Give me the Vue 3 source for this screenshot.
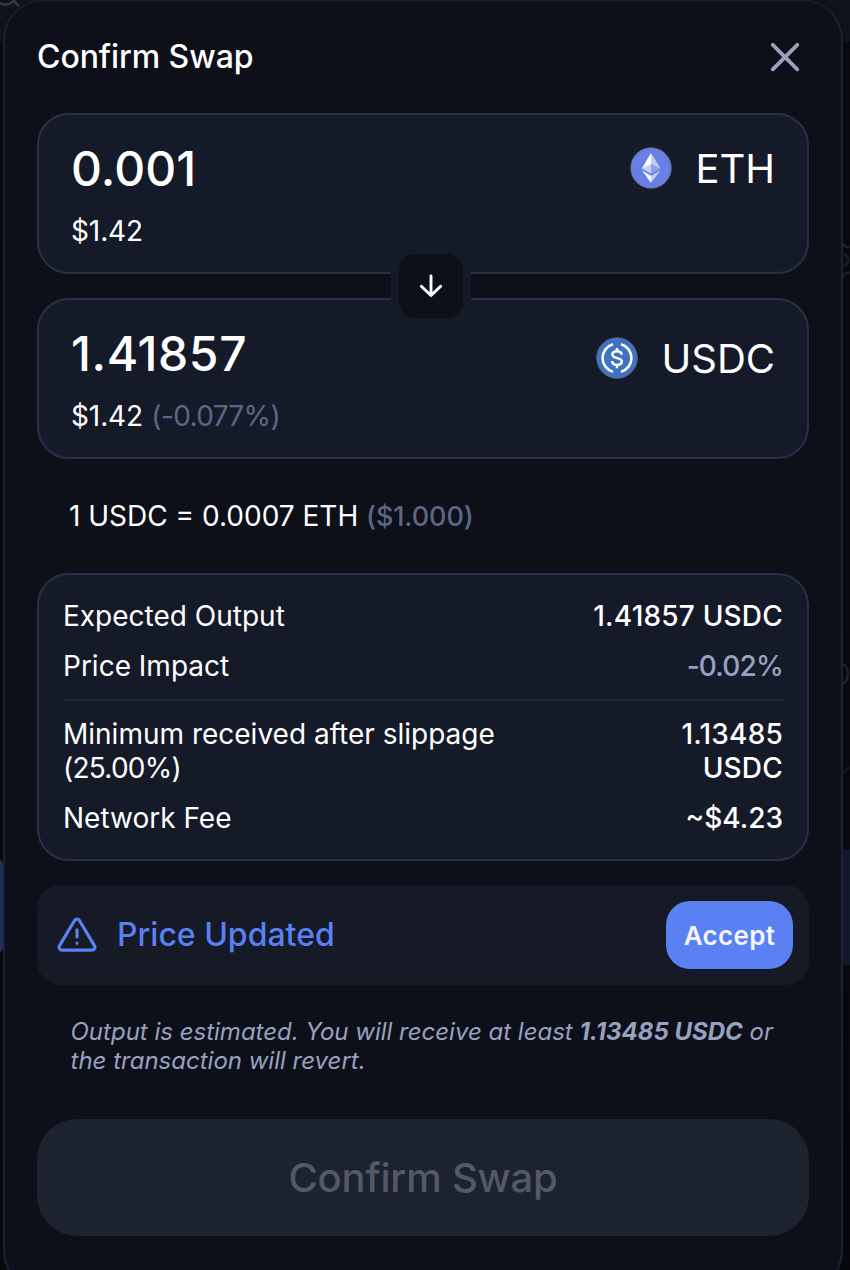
<script setup>
const details = [
  { label: 'Expected Output', value: '1.41857 USDC', cls: 'out' },
  { label: 'Price Impact', value: '-0.02%', cls: 'muted' },
]
const costs = [
  { label: 'Minimum received after slippage', extra: '(25.00%)', value: '1.13485 USDC', cls: 'wrap' },
  { label: 'Network Fee', value: '~$4.23' },
]
</script>

<template>
  <div class="screen">
    <div class="backdrop">
      <i class="glow glow-left"></i>
      <i class="glow glow-right"></i>
      <svg class="bg-search" width="24" height="12" viewBox="0 0 24 12"><circle cx="5" cy="-8" r="12.5" /><path d="M14 1l5 5.5" /></svg>
      <svg class="bg-gear" width="8" height="44" viewBox="0 0 8 44"><path d="M1 4q3 5 8 2M0 14a5 5 0 0 1 0 12M1 38q0-7 8-5" /></svg>
      <svg class="bg-zero" width="9" height="24" viewBox="0 0 9 24"><ellipse cx="1" cy="11" rx="6" ry="9.5" /></svg>
      <svg class="bg-chevron" width="8" height="12" viewBox="0 0 8 12"><path d="M0 9l8-7" /></svg>
    </div>
    <main class="modal">
      <header class="head">
        <h1>Confirm Swap</h1>
        <svg class="close" width="32" height="32" viewBox="0 0 32 32"><path d="M3.8 3.8l24.5 24.5M28.3 3.8L3.8 28.3" /></svg>
      </header>

      <section class="card token first">
        <div class="line">
          <span class="amount a1">0.001</span>
          <span class="symbol">
            <svg width="42" height="42" viewBox="0 0 42 42">
              <circle cx="21" cy="21" r="20.3" fill="#687fe5" stroke="#686a74" stroke-width=".8" />
              <path d="M21 6l-9 15.2 9 5.2z" fill="#fff" />
              <path d="M21 6l9.4 15.2-9.4 5.2z" fill="#c4cdf6" />
              <path d="M12 21.2l9-4.3v9.5z" fill="#c6cff7" />
              <path d="M30.4 21.2L21 16.9v9.5z" fill="#8c9eec" />
              <path d="M12 23.5l9 5.2v7.1z" fill="#fff" />
              <path d="M30.4 23.5L21 28.7v7.1z" fill="#c4cdf6" />
            </svg>
            <span class="s1">ETH</span>
          </span>
        </div>
        <div class="fiat">$1.42</div>
        <div class="swap-arrow">
          <span>
            <svg width="24" height="24" viewBox="0 0 24 24"><path d="M12 2v19.5M2.3 12.2L12 21.5l9.7-9.3" /></svg>
          </span>
        </div>
      </section>

      <section class="card token second">
        <div class="line">
          <span class="amount a2">1.41857</span>
          <span class="symbol low">
            <svg width="42" height="42" viewBox="0 0 42 42">
              <circle cx="21" cy="21" r="20.3" fill="#3e73c4" stroke="#686a74" stroke-width=".8" />
              <g fill="none" stroke="#fff" stroke-width="2.5">
                <path d="M17 7.3a14.2 14.2 0 0 0 0 27.4M25 7.3a14.2 14.2 0 0 1 0 27.4" />
                <path d="M25.6 17.8c0-2.4-1.8-3.6-4.6-3.6s-4.6 1.3-4.6 3.3c0 4.9 9.4 2.3 9.4 7.1 0 2.2-2 3.3-4.8 3.3s-4.8-1.4-4.8-3.8M21 11v3.2M21 28v3.2" />
              </g>
            </svg>
            <span class="s2">USDC</span>
          </span>
        </div>
        <div class="fiat">$1.42 <em class="delta">(-0.077%)</em></div>
      </section>

      <p class="rate"><span>1 USDC = 0.0007 ETH</span> <em>($1.000)</em></p>

      <section class="card details">
        <div v-for="d in details" :key="d.label" class="row">
          <span>{{ d.label }}</span><b :class="d.cls">{{ d.value }}</b>
        </div>
        <hr />
        <div v-for="d in costs" :key="d.label" class="row">
          <span>{{ d.label }} <i v-if="d.extra">{{ d.extra }}</i></span><b :class="d.cls">{{ d.value }}</b>
        </div>
      </section>

      <section class="alert">
        <svg width="40" height="36" viewBox="0 0 40 36"><path d="M17.4 3.7L2.6 28.6a3 3 0 0 0 2.6 4.6h29.6a3 3 0 0 0 2.6-4.6L22.6 3.7a3 3 0 0 0-5.2 0zM20 12.8v7.2M20 26.2v.1" /></svg>
        <span class="alert-text">Price Updated</span>
        <button class="accept"><span>Accept</span></button>
      </section>

      <p class="note">Output is estimated. You will receive at least <b>1.13485 USDC</b> or the transaction will revert.</p>

      <button class="confirm" disabled><span>Confirm Swap</span></button>
    </main>
  </div>
</template>

<style>
body { background: #07080c; overflow: hidden; }
</style>

<style scoped>
* { box-sizing: border-box; }
.screen { position: relative; width: 850px; height: 1270px; overflow: hidden; padding-left: 3px; font-family: Inter, sans-serif; color: #fff; }
.backdrop { position: absolute; inset: 0; background: linear-gradient(#10121b 0, #10121b 41px, #07090d 42px, #06080b 1270px); }
.backdrop svg { position: absolute; fill: none; stroke: #343744; stroke-width: 2.5; }
.bg-search { left: 0; top: 0; }
.backdrop .bg-gear { right: 0; top: 240px; stroke: #1b1e22; }
.backdrop .bg-chevron { right: 0; top: 765px; stroke: #15181b; }
.backdrop .bg-zero { right: 0; top: 663px; stroke: #1f2125; }
.glow { position: absolute; }
.glow-left { left: -20px; width: 25px; top: 857px; height: 98px; border-radius: 20px; background: #202f58; }
.glow-right { right: 0; width: 10px; top: 849px; height: 116px; background: #11182b; }
.modal { position: relative; width: 840px; height: 1291px; padding: 0 32px; border: 2px solid #1b2133; border-top-width: 1px; border-radius: 40px; background: #0e1019; }
.head { display: flex; justify-content: space-between; align-items: center; height: 112px; padding-right: 8px; }
h1 { margin: 0; font-size: 32px; line-height: 40px; font-weight: 480; letter-spacing: -0.06px; }
.close { fill: none; stroke: #99a1bd; stroke-width: 3.8; stroke-linecap: round; }
.card { position: relative; width: 772px; border: 2px solid #293045; border-radius: 32px; background: #151a28; }
.token { height: 161px; padding: 25px 32px 0 32px; }
.line { display: flex; justify-content: space-between; align-items: center; height: 58px; }
.amount { font-size: 48px; font-weight: 480; line-height: 58px; }
.a1 { letter-spacing: 0.1px; }
.a2 { letter-spacing: 0.6px; }
.symbol { display: flex; align-items: center; gap: 23px; font-size: 40px; line-height: 48px; }
.symbol svg { margin-bottom: 2px; }
.symbol.low { padding-top: 10px; }
.fiat { margin-top: 16px; font-size: 28px; line-height: 34px; letter-spacing: -0.1px; }
em { font-style: normal; color: #5d6785; }
.delta { letter-spacing: -0.65px; margin-left: 0.5px; }
.swap-arrow { position: absolute; z-index: 1; left: 352px; top: 131px; width: 80px; height: 80px; padding: 8px; background: #151a28; }
.swap-arrow > span { display: grid; place-items: center; height: 64px; border-radius: 16px; background: #0e1019; }
.swap-arrow svg, .alert > svg { fill: none; stroke: #fff; stroke-width: 2.9; stroke-linecap: round; stroke-linejoin: round; }
.second { margin-top: 24px; }
.rate { margin: 0; padding: 40px 32px 0; height: 114px; font-size: 28px; line-height: 34px; }
.rate em { font-size: 27px; font-weight: 480; letter-spacing: -0.1px; }
.details { height: 288px; padding: 24px; }
.row { display: flex; justify-content: space-between; font-size: 28px; line-height: 34px; }
.row + .row { margin-top: 16px; }
.row > span { max-width: 460px; }
.row i { font-style: normal; letter-spacing: -0.75px; }
.row b { font-weight: 480; text-align: right; white-space: nowrap; }
.row b.out { letter-spacing: 0.2px; }
.row b.wrap { width: 130px; white-space: normal; letter-spacing: 0.2px; }
.row b.muted { color: #98a1c0; letter-spacing: -0.8px; }
hr { height: 2px; margin: 16px 0; border: 0; background: #1f2535; }
.alert { display: flex; align-items: center; width: 772px; height: 100px; margin-top: 24px; padding: 0 16px 0 20px; border-radius: 24px; background: #161926; }
.alert > svg { stroke: #5981f3; stroke-width: 3.2; }
.alert-text { margin-left: 20px; color: #5981f3; font-size: 32px; line-height: 40px; padding-bottom: 1px; font-weight: 500; }
button { font-family: inherit; border: 0; padding: 0; }
.accept { margin-left: auto; width: 127px; height: 68px; border-radius: 24px; background: #5981f3; color: #f5f6fc; font-size: 26px; font-weight: 600; letter-spacing: 0.3px; }
.note { margin: 0; padding: 32px 32px 0 33.5px; height: 134px; font-size: 24px; line-height: 29px; font-style: italic; color: #98a1c0; }
.note b { font-weight: 700; }
.confirm { display: block; width: 772px; height: 117px; border-radius: 40px; background: #1d222f; color: #535968; font-size: 40px; font-weight: 500; letter-spacing: -0.2px; }
</style>
